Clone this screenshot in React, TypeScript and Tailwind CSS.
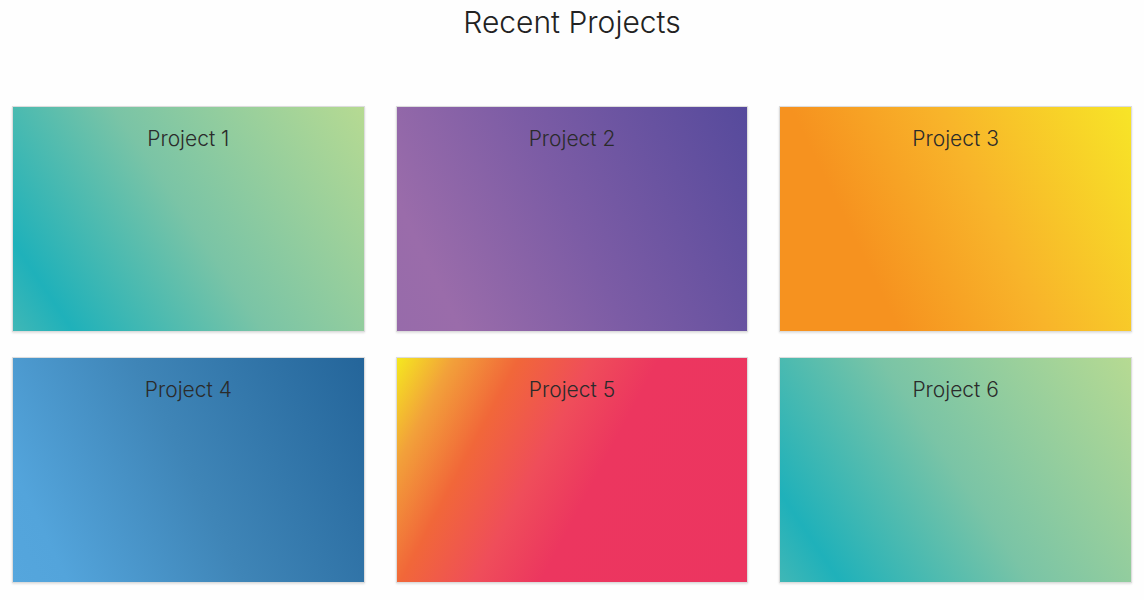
import React from 'react';

const projects = [
  {
    name: 'Project 1',
    bg: 'bg-[linear-gradient(56deg,#40b7b6_0%,#1fb1ba_12%,#7ac4a6_50%,#b6da92_100%)]',
  },
  {
    name: 'Project 2',
    bg: 'bg-[linear-gradient(64deg,#976baa_0%,#9a6caa_14%,#7c5ca5_50%,#564a9c_100%)]',
  },
  {
    name: 'Project 3',
    bg: 'bg-[linear-gradient(64deg,#f6921f_0%,#f6921f_26%,#f8b42a_58%,#f7e527_100%)]',
  },
  {
    name: 'Project 4',
    bg: 'bg-[linear-gradient(64deg,#55a6dd_0%,#53a4db_12%,#3f85b7_50%,#24659a_100%)]',
  },
  {
    name: 'Project 5',
    bg: 'bg-[linear-gradient(118deg,#f5e81f_0%,#f2a13a_12%,#f16739_26%,#ef4d5a_42%,#ec365f_56%,#ec3560_100%)]',
  },
  {
    name: 'Project 6',
    bg: 'bg-[linear-gradient(56deg,#40b7b6_0%,#1fb1ba_12%,#7ac4a6_50%,#b6da92_100%)]',
  },
];

function ProjectCard({ name, bg }: { name: string; bg: string }) {
  return (
    <div className={`h-[226px] border border-[#dcdcdc] shadow-[0_1px_2px_rgba(0,0,0,0.12)] pt-[17px] ${bg}`}>
      <h2 className="text-center text-[21px] leading-[30px] font-light text-[#2b2b2b]">{name}</h2>
    </div>
  );
}

export default function App() {
  return (
    <div className="min-h-screen bg-[#fefefe] font-['Inter','Liberation_Sans',sans-serif]">
      <h1 className="text-center text-[30px] leading-[44px] font-light text-[#222]">
        Recent Projects
      </h1>
      <div className="mt-[62px] grid grid-cols-3 gap-x-[31px] gap-y-[25px] px-3">
        {projects.map((p) => (
          <ProjectCard key={p.name} name={p.name} bg={p.bg} />
        ))}
      </div>
    </div>
  );
}
